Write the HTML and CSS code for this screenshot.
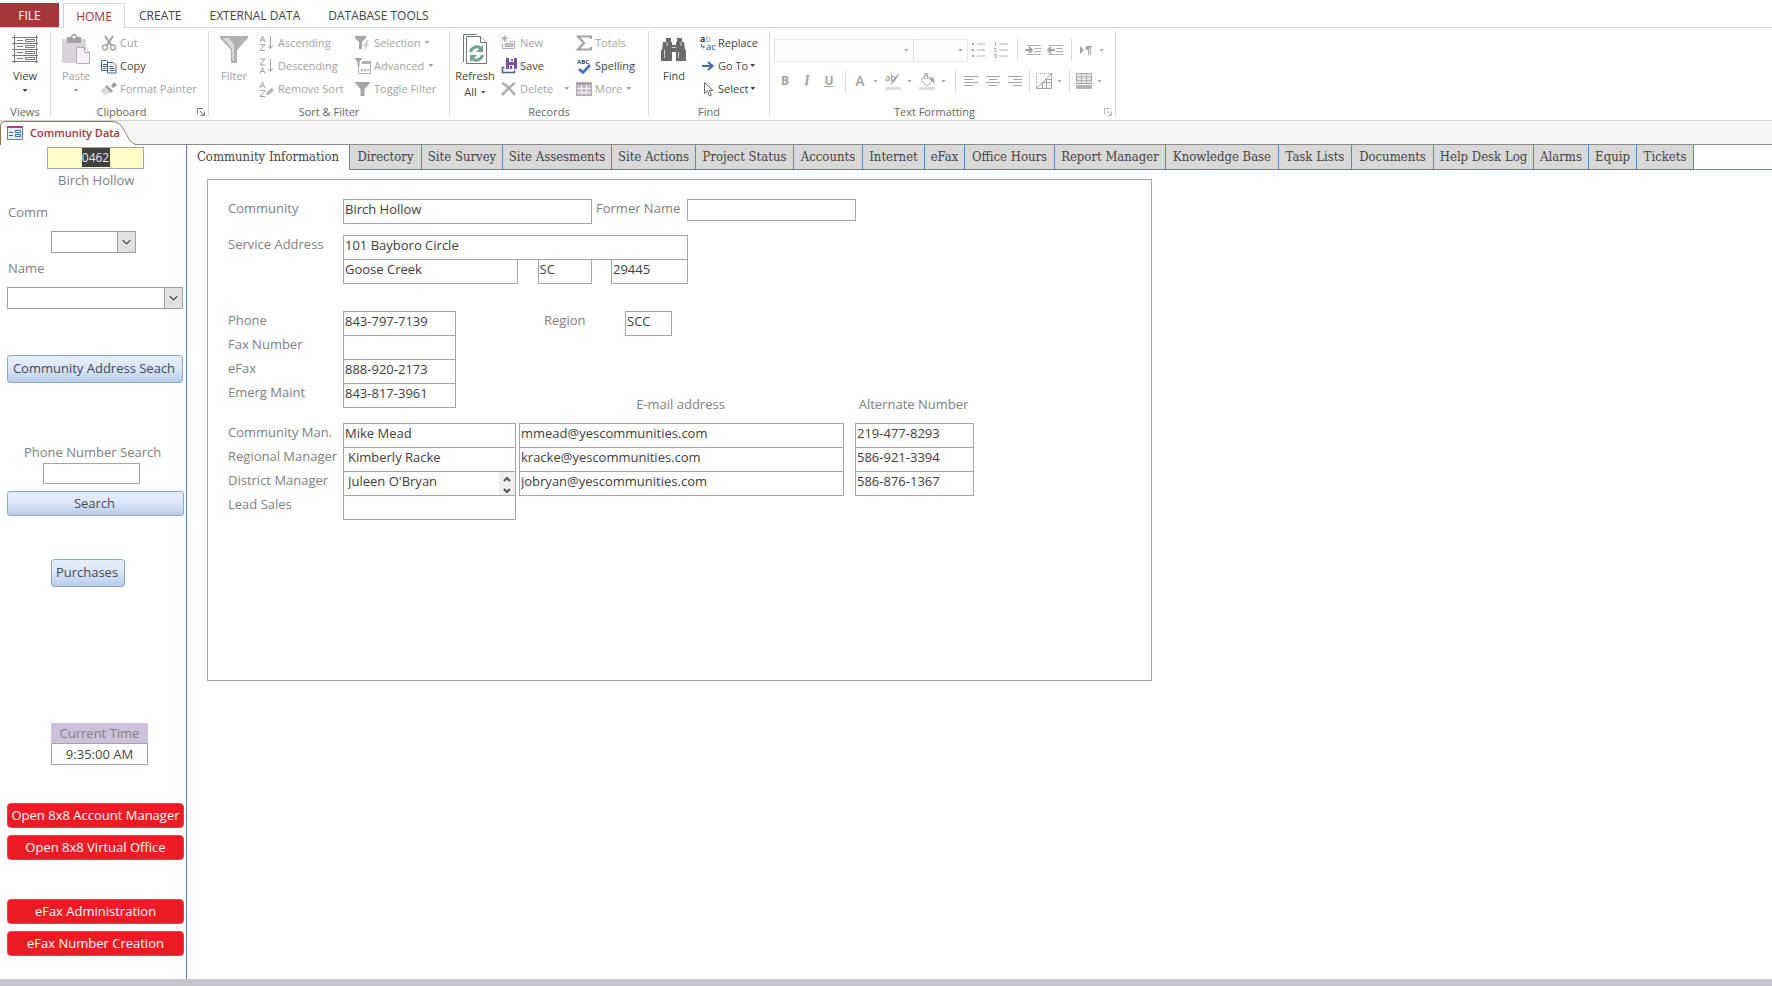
FILE: index.html
```
<!DOCTYPE html>
<html lang="en">
<head>
<meta charset="utf-8">
<title>Community Data</title>
<link rel="stylesheet" href="styles.css">
</head>
<body>
<nav class="menu">
  <button class="menu-file">FILE</button>
  <button class="menu-tab menu-active">HOME</button>
  <button class="menu-tab">CREATE</button>
  <button class="menu-tab">EXTERNAL DATA</button>
  <button class="menu-tab">DATABASE TOOLS</button>
</nav>

<header class="ribbon">
  <section class="group g-views">
    <div class="group-body">
      <button class="big on">
        <svg width="28" height="32" viewBox="0 0 28 32" fill="none" stroke="#7a7a7a"><path d="M3.500 2v28M25.500 2v28M1 4.500h26M1 10.500h26M1 16.500h26M1 22.500h26M1 28.500h26"/><path d="M6 7.500h6M6 13.500h6M6 19.500h6M6 25.500h6M14.500 6.500h9v2h-9zM14.500 12.500h9v2h-9zM14.500 18.500h9v2h-9zM14.500 24.500h9v2h-9z"/></svg>
        <span>View</span><i class="arrow"></i>
      </button>
    </div>
    <h2>Views</h2>
  </section>

  <section class="group g-clip">
    <div class="group-body">
      <button class="big">
        <svg width="30" height="32" viewBox="0 0 30 32"><path d="M1 6h24v24H1z" fill="#d9d3da"/><path d="M6 4h4a3 3 0 0 1 6 0h4v6H6z" fill="#a3a0a4"/><circle cx="13" cy="4" r="1.500" fill="#fff"/><path d="M15.500 14.500h8l5 5v11h-13z" fill="#f7f1f8" stroke="#b5aeb6"/><path d="M23.500 14.500v5h5" fill="none" stroke="#b5aeb6"/></svg>
        <span>Paste</span><i class="arrow"></i>
      </button>
      <div class="stack">
        <button class="small"><svg width="16" height="16" viewBox="0 0 16 16" fill="none" stroke="#a6a6a6"><path d="M4 1l6.500 10M12 1L5.500 11" stroke-width="2.200"/><circle cx="4" cy="12.500" r="2.500" stroke-width="1.400"/><circle cx="12" cy="12.500" r="2.500" stroke-width="1.400"/></svg>Cut</button>
        <button class="small on"><svg width="16" height="16" viewBox="0 0 16 16" fill="#fff" stroke="#4a6584"><path d="M.5 2.500h5l2 2v8h-7z"/><path d="M2 6.500h4M2 8.500h4M2 10.500h3"/><path d="M6.500 4.500h5.500l3 3v7.500H6.500z"/><path d="M8.500 8.500h4M8.500 10.500h5M8.500 12.500h5"/></svg>Copy</button>
        <button class="small"><svg width="16" height="16" viewBox="0 0 16 16"><path d="M13 1l3 3-4 3-2-2z" fill="#999"/><path d="M6 4l6 6-2 2-6-6z" fill="#a3a3a3"/><path d="M3 6l6 6-5 2-4-4z" fill="#dcd6dc"/></svg>Format Painter</button>
      </div>
    </div>
    <h2>Clipboard</h2>
    <button class="launcher" aria-label="Clipboard options"><svg width="8" height="8" viewBox="0 0 8 8" fill="none" stroke="#777"><path d="M.5 6V.5H6M3 3l4 4M7.500 3.500v4h-4"/></svg></button>
  </section>

  <section class="group g-sort">
    <div class="group-body">
      <button class="big">
        <svg width="28" height="32" viewBox="0 0 28 32"><path d="M0 3h28v2L17 17v13h-6V17L0 5z" fill="#b0b0b0"/><path d="M3 5h6l5 7v15h-2V16z" fill="#d8d8d8"/></svg>
        <span>Filter</span>
      </button>
      <div class="stack c-sort">
        <button class="small"><svg width="16" height="16" viewBox="0 0 16 16" fill="none" stroke="#a3a3a3"><path d="M1 7l2.500-6L6 7M2 5h3M1 9.500h5L1 15.500h5M11.500 1v12M9 10.500l2.500 3 2.500-3"/></svg>Ascending</button>
        <button class="small"><svg width="16" height="16" viewBox="0 0 16 16" fill="none" stroke="#a3a3a3"><path d="M1 1h5L1 7h5M1 15.500l2.500-6 2.500 6M2 13.500h3M11.500 1v12M9 10.500l2.500 3 2.500-3"/></svg>Descending</button>
        <button class="small"><svg width="16" height="16" viewBox="0 0 16 16" fill="none" stroke="#a3a3a3"><path d="M1 7l2.500-6L6 7M2 5h3M1 9.500h5L1 15.500h5"/><path d="M7 12l5-5 3 2-5 5H8z" fill="#b8b8b8" stroke="none"/></svg>Remove Sort</button>
      </div>
      <div class="stack">
        <button class="small"><svg width="16" height="16" viewBox="0 0 16 16"><path d="M0 1h11v2L7 7v7H4V7L0 3z" fill="#a6a6a6"/><path d="M12 5L8 11h2l-1 5 5-7h-2l2-4z" fill="#cfcfcf"/></svg>Selection<i class="arrow"></i></button>
        <button class="small"><svg width="16" height="16" viewBox="0 0 16 16"><path d="M0 0h7v1L4.500 4v4h-2V4L0 1z" fill="#a6a6a6"/><path d="M3.500 8v7.500h12v-12H7" fill="none" stroke="#b0b0b0"/><path d="M7 3h9v3H7zM6 11h2v2H6zM9 11h2v2H9zM12 11h2v2h-2z" fill="#b0b0b0"/></svg>Advanced<i class="arrow"></i></button>
        <button class="small"><svg width="16" height="16" viewBox="0 0 16 16"><path d="M0 1h15v1L9.500 8v7h-4V8L0 2z" fill="#a6a6a6"/></svg>Toggle Filter</button>
      </div>
    </div>
    <h2>Sort &amp; Filter</h2>
  </section>

  <section class="group g-rec">
    <div class="group-body">
      <button class="big on">
        <svg width="26" height="32" viewBox="0 0 26 32" fill="#fff" stroke="#767676"><path d="M15 1.500H1.500V29"/><path d="M4.500 3.500h14l6 6v21h-20z"/><path d="M18.500 3.500v6h6" /><g fill="none" stroke="#6da58c" stroke-width="3"><path d="M8.500 19a6.500 6.500 0 0 1 10-4M20.500 22a6.500 6.500 0 0 1-10 4"/></g><path d="M21 12v7h-7zM8 29v-7h7z" fill="#6da58c" stroke="none"/></svg>
        <span>Refresh</span><span class="second">All<i class="arrow"></i></span>
      </button>
      <div class="stack c-rec">
        <button class="small"><svg width="16" height="16" viewBox="0 0 16 16" fill="none" stroke="#b0b0b0"><path d="M3.500 0v7M0 3.500h7M1 1l5 5M6 1L1 6"/><path d="M1.500 9v4.500h12v-7H8"/><path d="M4 8.500h8v3H4z" fill="#c4c4c4"/></svg>New</button>
        <button class="small on"><svg width="16" height="16" viewBox="0 0 16 16"><path d="M5 0h11v11H5z" fill="#7d4fa0"/><path d="M8 0h5v4H8zM8 7h5v4H8z" fill="#fff"/><path d="M10 1h2v2h-2zM9 8h2v3H9z" fill="#7d4fa0"/><path d="M3.500 9.500h-2v5h12v-2" fill="none" stroke="#44668e" stroke-width="1.600"/></svg>Save</button>
        <button class="small"><svg width="16" height="16" viewBox="0 0 16 16"><path d="M1 2c5 2 9 7 13 12M14 2C9 5 5 10 1 14" fill="none" stroke="#b0b0b0" stroke-width="2.600"/></svg>Delete<i class="arrow far"></i></button>
      </div>
      <div class="stack">
        <button class="small"><svg width="16" height="16" viewBox="0 0 16 16"><path d="M15 4V1.500H2L8 8l-6 6.500h13V12" fill="none" stroke="#a3a3a3" stroke-width="2.200"/></svg>Totals</button>
        <button class="small on"><svg width="16" height="16" viewBox="0 0 16 16"><text x="1" y="6" class="abc">ABC</text><path d="M3 11l4 3.500L14 7" fill="none" stroke="#4472b8" stroke-width="2.600"/></svg>Spelling</button>
        <button class="small"><svg width="16" height="16" viewBox="0 0 16 16"><path d="M0 1h16v14H0z" fill="#c9c2c9"/><path d="M0 1h16v3H0z" fill="#a3a3a3"/><path d="M0 7.500h16M0 11.500h16M5.500 4v11M10.500 4v11" stroke="#f4eff4"/><path d="M.5 1.500h15v13H.5z" fill="none" stroke="#b0abb0"/></svg>More<i class="arrow"></i></button>
      </div>
    </div>
    <h2>Records</h2>
  </section>

  <section class="group g-find">
    <div class="group-body">
      <button class="big on">
        <svg width="28" height="32" viewBox="0 0 28 32"><path d="M6 5h5v4h1v3h4V9h1V5h5v4h2l1 8h1v11H16v-9h-4v9H1V17h1l1-8h3z" fill="#6a6a6a"/><path d="M7 9v4M21 9v4M4.500 17v8M18.500 19v6M12 14.500h4" stroke="#d0d0d0"/></svg>
        <span>Find</span>
      </button>
      <div class="stack">
        <button class="small on"><svg width="18" height="18" viewBox="0 0 18 18"><text x="1" y="8" class="ab">a<tspan fill="#b8b8b8">b</tspan></text><text x="7" y="16" class="ab" fill="#3f72ad">ac</text><path d="M2.500 10v3H5M4 11.500L5.500 13 4 14.500" fill="none" stroke="#3f72ad"/></svg>Replace</button>
        <button class="small on"><svg width="18" height="16" viewBox="0 0 18 16"><path d="M3 8h9M9 4l4.500 4L9 12" fill="none" stroke="#3f72ad" stroke-width="2.200"/></svg>Go To<i class="arrow"></i></button>
        <button class="small on"><svg width="18" height="16" viewBox="0 0 18 16"><path d="M5.500 1.500v11l3-2.500 2 5 2-1-2-4.500h3.500z" fill="#fff" stroke="#6a6a6a"/></svg>Select<i class="arrow"></i></button>
      </div>
    </div>
    <h2>Find</h2>
  </section>

  <section class="group g-text">
    <div class="group-body tools">
      <div class="tool-row">
        <div class="pick pick-font"><select aria-label="Font" disabled></select><i class="arrow"></i></div>
        <div class="pick pick-size"><select aria-label="Font size" disabled></select><i class="arrow"></i></div>
        <button class="tool" aria-label="Bullets"><svg width="16" height="16" viewBox="0 0 16 16"><path d="M1 1h2v2H1zM1 7h2v2H1zM1 13h2v2H1z" fill="#a3a3a3"/><path d="M6 2h8M6 8h8M6 14h8" stroke="#b0b0b0"/></svg></button>
        <button class="tool" aria-label="Numbering"><svg width="16" height="18" viewBox="0 0 16 18"><path d="M6 3h9M6 9h9M6 15h9" stroke="#b0b0b0"/><path d="M1 1.500h1.500V5M1 7.500h2v1.500L1 10.500h2.500M1 13h2.500L2 14.500h1.500v2H1" fill="none" stroke="#b0b0b0"/></svg></button>
        <i class="sep"></i>
        <button class="tool" aria-label="Increase indent"><svg width="16" height="16" viewBox="0 0 16 16"><path d="M2 3.500h14M9 6.500h7M9 9.500h7M2 12.500h14" stroke="#b0b0b0"/><path d="M0 8h6M4 5l3 3-3 3" fill="none" stroke="#a3a3a3" stroke-width="1.800"/></svg></button>
        <button class="tool" aria-label="Decrease indent"><svg width="16" height="16" viewBox="0 0 16 16"><path d="M2 3.500h14M9 6.500h7M9 9.500h7M2 12.500h14" stroke="#b0b0b0"/><path d="M8 8H2M4 5L1 8l3 3" fill="none" stroke="#a3a3a3" stroke-width="1.800"/></svg></button>
        <i class="sep"></i>
        <button class="tool narrow" aria-label="Text direction"><svg width="14" height="16" viewBox="0 0 14 16"><path d="M1 4v8l4-4z" fill="#a3a3a3"/><path d="M9.500 4v8.500M11.500 4v8.500M13 4.500H8.500" stroke="#a3a3a3"/><circle cx="8.500" cy="6" r="2" fill="#a3a3a3"/></svg></button><i class="arrow"></i>
      </div>
      <div class="tool-row">
        <button class="tool"><b>B</b></button>
        <button class="tool serif"><em>I</em></button>
        <button class="tool"><u>U</u></button>
        <i class="sep"></i>
        <button class="tool letter narrow">A</button><i class="arrow"></i>
        <button class="tool" aria-label="Highlight"><svg width="18" height="18" viewBox="0 0 18 18"><path d="M1 15h16v3H1z" fill="#dedede"/><text x="1" y="9" class="ab" fill="#999">ab</text><path d="M15 3l-5 7-3 3 1-4 6-7z" fill="#a8a8a8"/></svg></button><i class="arrow"></i>
        <button class="tool" aria-label="Fill"><svg width="18" height="18" viewBox="0 0 18 18"><path d="M1 15h16v3H1z" fill="#dedede"/><path d="M8 3l6 6-5 5-6-6zM6.500 7V1.500h3V7" fill="none" stroke="#aaa"/><path d="M12 5c4 0 5 3 4 7-1-3-2-3-3-3z" fill="#a3a3a3"/></svg></button><i class="arrow"></i>
        <i class="sep"></i>
        <button class="tool" aria-label="Align left"><svg width="14" height="12" viewBox="0 0 14 12"><path d="M0 1.500h14M0 4.500h9M0 7.500h14M0 10.500h9" stroke="#a3a3a3"/></svg></button>
        <button class="tool" aria-label="Center"><svg width="14" height="12" viewBox="0 0 14 12"><path d="M0 1.500h14M3 4.500h8M0 7.500h14M3 10.500h8" stroke="#a3a3a3"/></svg></button>
        <button class="tool" aria-label="Align right"><svg width="14" height="12" viewBox="0 0 14 12"><path d="M0 1.500h14M5 4.500h9M0 7.500h14M5 10.500h9" stroke="#a3a3a3"/></svg></button>
        <i class="sep tight"></i>
        <button class="tool narrow" aria-label="Gridlines"><svg width="16" height="16" viewBox="0 0 16 16" fill="none" stroke="#a69fa6"><path d="M.5 15V.5H15" stroke-dasharray="1 1"/><path d="M.5 15.500h15V.5zM6 9.500h9M9 6.500h6M6.500 9v6M10.500 5v10"/></svg></button><i class="arrow"></i>
        <i class="sep tight"></i>
        <button class="tool narrow" aria-label="Row color"><svg width="16" height="16" viewBox="0 0 16 16"><path d="M.5.500h15v10H.5z" fill="#ebe6eb" stroke="#a3a3a3"/><path d="M0 4h16M0 7.500h16M5.500 0v10M10.500 0v10" stroke="#b0b0b0"/><path d="M0 12h16v4H0z" fill="#b5b5b5"/></svg></button><i class="arrow"></i>
      </div>
    </div>
    <h2>Text Formatting</h2>
    <button class="launcher" aria-label="Text formatting options"><svg width="8" height="8" viewBox="0 0 8 8" fill="none" stroke="#b5b5b5"><path d="M.5 6V.5H6M3 3l4 4M7.500 3.500v4h-4"/></svg></button>
  </section>
</header>

<div class="docs">
  <button class="doc">
    <svg class="doc-shape" width="136" height="24" viewBox="0 0 136 24"><path d="M.5 24V5Q.5 1 5 .5h107c8 0 11 6 15 14q4 8 8 9V24z" fill="#fff"/><path d="M.5 24V5Q.5 1 5 .5h107c8 0 11 6 15 14q4 8 9 9" fill="none" stroke="#8a7a55"/></svg>
    <svg class="doc-icon" width="16" height="14" viewBox="0 0 16 14"><path d="M.5.500h15v13H.5z" fill="#e4edf8" stroke="#5f7cab"/><path d="M0 0h16v2H0z" fill="#b0436a"/><path d="M2 6.500h4M2 9.500h4" stroke="#44689c"/><path d="M8.500 4.500h5v2h-5zM8.500 8.500h5v2h-5z" fill="#fff" stroke="#44689c"/></svg>
    <span>Community Data</span>
  </button>
</div>

<div class="work">
  <aside class="side">
    <div class="code"><input aria-label="Community number" value="0462"></div>
    <p class="code-name">Birch Hollow</p>
    <label class="side-label" for="comm">Comm</label>
    <div class="combo combo-comm"><select id="comm"></select><svg width="18" height="20" viewBox="0 0 18 20"><path d="M5 8l4 4 4-4" fill="none" stroke="#444" stroke-width="1.300"/></svg></div>
    <label class="side-label" for="name">Name</label>
    <div class="combo combo-name"><select id="name"></select><svg width="18" height="20" viewBox="0 0 18 20"><path d="M5 8l4 4 4-4" fill="none" stroke="#444" stroke-width="1.300"/></svg></div>
    <button class="blue b-address">Community Address Seach</button>
    <label class="phone-label" for="phsearch">Phone Number Search</label>
    <input class="phone-search" id="phsearch">
    <button class="blue b-search">Search</button>
    <button class="blue b-purchase">Purchases</button>
    <div class="clock"><label for="time">Current Time</label><input id="time" value="9:35:00 AM"></div>
    <div class="reds">
      <button class="red">Open 8x8 Account Manager</button>
      <button class="red">Open 8x8 Virtual Office</button>
    </div>
    <div class="reds">
      <button class="red">eFax Administration</button>
      <button class="red">eFax Number Creation</button>
    </div>
  </aside>

  <main class="main">
    <nav class="tabs">
      <button class="tab tab-on">Community Information</button><button class="tab">Directory</button><button class="tab">Site Survey</button><button class="tab">Site Assesments</button><button class="tab">Site Actions</button><button class="tab">Project Status</button><button class="tab">Accounts</button><button class="tab">Internet</button><button class="tab">eFax</button><button class="tab">Office Hours</button><button class="tab">Report Manager</button><button class="tab">Knowledge Base</button><button class="tab">Task Lists</button><button class="tab">Documents</button><button class="tab">Help Desk Log</button><button class="tab">Alarms</button><button class="tab">Equip</button><button class="tab">Tickets</button><span class="tab-rest"></span>
    </nav>
    <form class="card">
      <div class="row">
        <label class="lead" for="f1">Community</label><input class="w-comm" id="f1" value="Birch Hollow">
        <label class="former" for="f2">Former Name</label><input class="w-former" id="f2">
      </div>
      <div class="row row-address">
        <label class="lead" for="f3">Service Address</label><input class="w-street" id="f3" value="101 Bayboro Circle">
      </div>
      <div class="row">
        <span class="lead"></span><div class="place"><input class="w-city" aria-label="City" value="Goose Creek"><input class="w-state" aria-label="State" value="SC"><input class="w-zip" aria-label="Zip" value="29445"></div>
      </div>
      <div class="row row-phone">
        <label class="lead" for="f4">Phone</label><input class="w-phone" id="f4" value="843-797-7139">
        <label class="region" for="f5">Region</label><input class="w-region" id="f5" value="SCC">
      </div>
      <div class="row"><label class="lead" for="f6">Fax Number</label><input class="w-phone" id="f6"></div>
      <div class="row"><label class="lead" for="f7">eFax</label><input class="w-phone" id="f7" value="888-920-2173"></div>
      <div class="row row-emerg">
        <label class="lead" for="f8">Emerg Maint</label><input class="w-phone" id="f8" value="843-817-3961">
        <span class="head-mail">E-mail address</span><span class="head-alt">Alternate Number</span>
      </div>
      <div class="row row-staff">
        <label class="lead" for="f9">Community Man.</label><input class="w-name" id="f9" value="Mike Mead"><input class="w-mail" aria-label="Community manager e-mail" value="mmead@yescommunities.com"><input class="w-alt" aria-label="Community manager alternate number" value="219-477-8293">
      </div>
      <div class="row">
        <label class="lead" for="f10">Regional Manager</label><input class="w-name inset" id="f10" value="Kimberly Racke"><input class="w-mail" aria-label="Regional manager e-mail" value="kracke@yescommunities.com"><input class="w-alt" aria-label="Regional manager alternate number" value="586-921-3394">
      </div>
      <div class="row">
        <label class="lead" for="f11">District Manager</label><div class="scroller"><input class="w-name inset" id="f11" value="Juleen O'Bryan"><svg width="16" height="23" viewBox="0 0 16 23"><path d="M0 0h16v23H0z" fill="#f0f0f0"/><path d="M5 9l3-3 3 3M5 17l3 3 3-3" fill="none" stroke="#555" stroke-width="2"/></svg></div><input class="w-mail" aria-label="District manager e-mail" value="jobryan@yescommunities.com"><input class="w-alt" aria-label="District manager alternate number" value="586-876-1367">
      </div>
      <div class="row"><label class="lead" for="f12">Lead Sales</label><input class="w-name" id="f12"></div>
    </form>
  </main>
</div>
<footer class="foot"></footer>
</body>
</html>
```
FILE: styles.css
```
* { box-sizing: border-box; }
body {
  margin: 0;
  min-height: 100vh;
  display: flex;
  flex-direction: column;
  background: #fff;
  color: #444;
  font: 13px/18px "Open Sans", sans-serif;
}
button, input, select { font: inherit; color: inherit; margin: 0; border-radius: 0; }
button { background: none; border: 0; padding: 0; white-space: nowrap; }
svg { display: block; flex: none; overflow: visible; }

/* menu */
.menu { display: flex; height: 28px; padding-top: 3px; border-bottom: 1px solid #d4d4d4; font-size: 12px; }
.menu-file { width: 59px; margin-right: 4px; padding-top: 2px; background: #a4373a; color: #fff; }
.menu-tab { padding: 2px 14px 0; }
.menu-active { width: 62px; padding: 1px 0 0; margin-bottom: -1px; border: 1px solid #d4d4d4; border-bottom: 0; background: #fff; color: #a4373a; }

/* ribbon */
.ribbon { display: flex; border-bottom: 1px solid #d4d4d4; padding: 3px 0 4px; font-size: 11px; color: #a3a3a3; }
.group { position: relative; display: flex; flex-direction: column; border-right: 1px solid #dcdcdc; }
.group-body { display: flex; height: 74px; }
.group h2 { margin: 0 0 -3px; font-size: 11px; line-height: 14px; font-weight: 400; color: #666; text-align: center; }
.group.g-clip h2, .group.g-text h2 { padding-right: 16px; }
.g-views { width: 51px; }
.g-clip { width: 158px; }
.g-sort { width: 241px; }
.g-rec { width: 199px; }
.g-find { width: 121px; }
.g-text { width: 346px; }
.on { color: #444; }
.big { width: 50px; height: 71px; display: flex; flex-direction: column; align-items: center; padding-top: 2px; line-height: 16px; }
.big svg { margin-bottom: 3px; }
.big > .arrow { margin-top: 5px; }
.second { display: flex; align-items: center; }
.stack { display: grid; grid-template-rows: repeat(3, 23px); align-content: start; justify-items: start; }
.small { display: flex; align-items: center; gap: 3px; }
.g-find .small { gap: 1px; }
.c-sort { width: 96px; }
.c-rec { width: 75px; }
.g-rec .big { margin-right: 1px; }
.arrow { flex: none; width: 5px; height: 3px; margin-left: 1px; background: currentColor; clip-path: polygon(0 0, 100% 0, 50% 100%); }
.big > .arrow { margin-left: 0; }
.second .arrow { margin-left: 4px; }
.far { margin-left: 8px; }
.launcher { position: absolute; right: 3px; bottom: 0; }
.abc { font: 700 6px "Open Sans", sans-serif; fill: #444; }
.ab { font: 600 9px "Open Sans", sans-serif; }
.tools { flex-direction: column; padding-left: 4px; }
.tool-row { display: flex; align-items: center; height: 38px; }
.tool-row + .tool-row { height: 24px; }
.tool { width: 22px; height: 22px; display: flex; align-items: center; justify-content: center; font-size: 12px; }
.narrow { width: 20px; }
.letter { font-size: 14px; font-weight: 600; }
.serif { font-family: "Liberation Serif", serif; font-size: 14px; font-weight: 700; }
.tool u { font-weight: 700; }
.tool-row > .arrow { margin: 0 4px 0 3px; }
.sep { width: 1px; height: 22px; margin: 0 4px 0 5px; background: #dcdcdc; }
.tight { margin-left: 3px; }
.pick { position: relative; height: 23px; }
.pick select { appearance: none; width: 100%; height: 23px; border: 1px solid #dcdcdc; background: #fdfdfd; display: block; }
.pick .arrow { position: absolute; right: 5px; top: 10px; }
.pick-font { width: 140px; margin-right: -1px; }
.pick-size { width: 55px; }

/* document tabs */
.docs { height: 24px; background: #f6f6f6; border-bottom: 1px solid #8c8c8c; }
.doc { position: relative; display: flex; align-items: center; gap: 7px; height: 24px; width: 136px; padding-left: 7px; color: #a4373a; font-size: 11px; font-weight: 600; }
.doc-shape { position: absolute; left: 0; top: 0; }
.doc-icon, .doc span { position: relative; }

/* workspace */
.work { flex: 1; display: flex; }
.side { width: 187px; flex: none; display: flex; flex-direction: column; align-items: flex-start; border-right: 1px solid #5f86bd; padding: 2px 2px 22px 7px; }
.code { width: 97px; height: 22px; margin-left: 40px; border: 1px solid #a6a6a6; background: #ffffc8; display: flex; justify-content: center; }
.code input { width: 28px; height: 19px; border: 0; padding: 0; background: #404040; color: #e8e8e8; text-align: center; font-size: 12px; }
.code-name { margin: 2px 0 0 51px; color: #808080; }
.side-label { margin: 14px 0 0 1px; color: #808080; }
.combo { position: relative; }
.combo select { appearance: none; display: block; width: 100%; height: 22px; border: 1px solid #a0a0a0; background: #fff; padding: 0; }
.combo svg { position: absolute; right: 1px; top: 1px; background: #e1e1e1; border-left: 1px solid #a0a0a0; }
.combo-comm { width: 85px; margin: 10px 0 -8px 44px; }
.combo-name { width: 176px; margin-top: 10px; }
.blue { border: 1px solid #8ba9cf; border-radius: 3px; background: linear-gradient(#e6eefb, #dce7f7 45%, #b9cdeb); color: #3f4a57; width: 177px; padding: 0 2px 2px 0; }
.b-address { height: 28px; margin-top: 46px; width: 176px; }
.phone-label { margin: 60px 0 2px 17px; color: #808080; }
.phone-search { width: 97px; height: 21px; margin-left: 36px; border: 1px solid #a6a6a6; }
.b-search { height: 25px; margin-top: 7px; }
.b-purchase { width: 74px; height: 28px; margin: 43px 0 0 44px; }
.clock { width: 97px; margin: 136px 0 38px 44px; text-align: center; }
.clock label { display: block; background: #ccc0da; line-height: 20px; color: #808080; }
.clock input { display: block; width: 97px; height: 22px; border: 1px solid #a6a6a6; text-align: center; }
.reds { display: grid; gap: 7px; width: 177px; margin-bottom: 39px; }
.reds:last-child { margin-bottom: 0; }
.red { height: 25px; border: 1px solid #d8485a; border-radius: 4px; background: #ed1c24; color: #fff; padding-bottom: 1px; }

.main { flex: 1; min-width: 0; }
.tabs {
  display: grid;
  grid-template-columns: 163px 72px 81px 109px 84px 98px 69px 62px 40px 90px 111px 113px 73px 82px 100px 55px 48px 57px 1fr;
  height: 25px;
  font: 13px/18px "DejaVu Serif Condensed", "DejaVu Serif", serif;
}
.tab { border: 1px solid #5f86bd; border-width: 0 1px 1px 0; background: #d9d9d9; }
.tab-on { background: #fff; border-bottom-color: #fff; }
.tab-rest { border-bottom: 1px solid #5f86bd; }

.card { margin: 9px 0 0 20px; width: min(945px, 100%); min-height: 502px; border: 1px solid #a6a6a6; padding: 19px 0 0 20px; color: #404040; }
.row { display: flex; align-items: flex-start; height: 24px; }
.row input { height: 25px; flex: none; border: 1px solid #a6a6a6; background: #fff; padding: 0 1px 5px; }
.row label, .row span { flex: none; line-height: 19px; color: #808080; }
.lead { width: 115px; }
.row .w-comm { width: 249px; }
.former { width: 95px; padding-left: 4px; }
.row .w-former { width: 169px; height: 22px; }
.row-address { margin-top: 12px; }
.row .w-street { width: 345px; }
.place { display: flex; justify-content: space-between; width: 345px; }
.row .w-city { width: 175px; }
.row .w-state { width: 54px; }
.row .w-zip { width: 77px; }
.row-phone { margin-top: 28px; }
.row .w-phone { width: 113px; }
.region { width: 169px; padding-left: 88px; }
.row .w-region { width: 47px; }
.row .head-mail, .row .head-alt { padding-top: 12px; text-align: center; }
.row .head-mail { margin-left: 62px; width: 325px; }
.row .head-alt { margin-left: 11px; width: 119px; }
.row-staff { margin-top: 16px; }
.row .w-name { width: 173px; }
.row .w-name.inset { padding-left: 4px; }
.row .w-mail { width: 325px; margin-left: 3px; }
.row .w-alt { width: 119px; margin-left: 11px; }
.scroller { position: relative; }
.scroller input { display: block; }
.scroller svg { position: absolute; right: 1px; top: 1px; }

.foot { height: 7px; background: #c5c5c9; }
```
